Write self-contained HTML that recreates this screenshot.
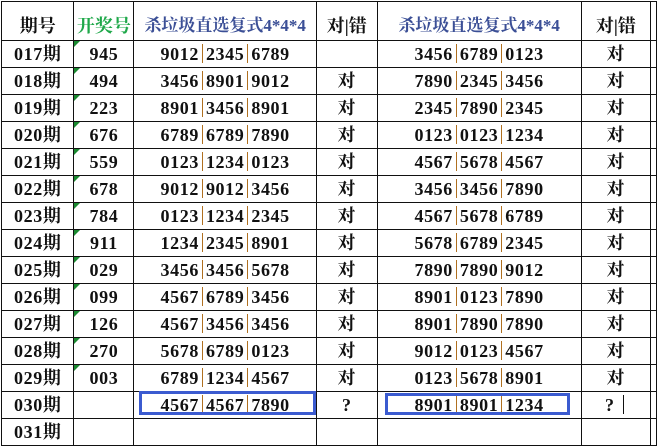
<!DOCTYPE html>
<html><head><meta charset="utf-8"><style>
body{margin:0;width:657px;height:446px;overflow:hidden;background:#fff;font-family:"Liberation Serif","Noto Serif CJK SC",serif;}
table{position:absolute;left:1px;top:1px;border-collapse:collapse;table-layout:fixed;}
td{border:1px solid #111;height:26px;line-height:26px;padding:0;text-align:center;font-weight:bold;font-size:18px;color:#111;white-space:nowrap;overflow:hidden;position:relative;vertical-align:middle;letter-spacing:0.6px;}
tr.h td{height:35px;line-height:22px;vertical-align:bottom;padding-bottom:3px;letter-spacing:0;}
.g{color:#1fa84a;} .b{color:#3b4f96;font-weight:bold;font-size:17px;letter-spacing:0 !important;}
.p{display:inline-block;width:1px;height:19px;background:#b07020;vertical-align:-3px;margin:0 3px;}
.tri{position:absolute;left:0;top:0;width:0;height:0;border-top:6px solid #1a8a30;border-right:6px solid transparent;}
.box{position:absolute;border:3px solid #3b5bd0;}
</style></head><body>
<table>
<colgroup><col style="width:73px"><col style="width:60px"><col style="width:183px"><col style="width:61px"><col style="width:205px"><col style="width:70px"><col style="width:6px"></colgroup>
<tr class="h"><td>期号</td><td class="g">开奖号</td><td class="b">杀垃圾直选复式4*4*4</td><td>对|错</td><td class="b" style="border-left-color:#ccc">杀垃圾直选复式4*4*4</td><td>对|错</td><td></td></tr>
<tr><td>017期</td><td><i class="tri"></i>945</td><td>9012<i class="p"></i>2345<i class="p"></i>6789</td><td></td><td>3456<i class="p"></i>6789<i class="p"></i>0123</td><td>对</td><td></td></tr>
<tr><td>018期</td><td><i class="tri"></i>494</td><td>3456<i class="p"></i>8901<i class="p"></i>9012</td><td>对</td><td>7890<i class="p"></i>2345<i class="p"></i>3456</td><td>对</td><td></td></tr>
<tr><td>019期</td><td><i class="tri"></i>223</td><td>8901<i class="p"></i>3456<i class="p"></i>8901</td><td>对</td><td>2345<i class="p"></i>7890<i class="p"></i>2345</td><td>对</td><td></td></tr>
<tr><td>020期</td><td><i class="tri"></i>676</td><td>6789<i class="p"></i>6789<i class="p"></i>7890</td><td>对</td><td>0123<i class="p"></i>0123<i class="p"></i>1234</td><td>对</td><td></td></tr>
<tr><td>021期</td><td><i class="tri"></i>559</td><td>0123<i class="p"></i>1234<i class="p"></i>0123</td><td>对</td><td>4567<i class="p"></i>5678<i class="p"></i>4567</td><td>对</td><td></td></tr>
<tr><td>022期</td><td><i class="tri"></i>678</td><td>9012<i class="p"></i>9012<i class="p"></i>3456</td><td>对</td><td>3456<i class="p"></i>3456<i class="p"></i>7890</td><td>对</td><td></td></tr>
<tr><td>023期</td><td><i class="tri"></i>784</td><td>0123<i class="p"></i>1234<i class="p"></i>2345</td><td>对</td><td>4567<i class="p"></i>5678<i class="p"></i>6789</td><td>对</td><td></td></tr>
<tr><td>024期</td><td><i class="tri"></i>911</td><td>1234<i class="p"></i>2345<i class="p"></i>8901</td><td>对</td><td>5678<i class="p"></i>6789<i class="p"></i>2345</td><td>对</td><td></td></tr>
<tr><td>025期</td><td><i class="tri"></i>029</td><td>3456<i class="p"></i>3456<i class="p"></i>5678</td><td>对</td><td>7890<i class="p"></i>7890<i class="p"></i>9012</td><td>对</td><td></td></tr>
<tr><td>026期</td><td><i class="tri"></i>099</td><td>4567<i class="p"></i>6789<i class="p"></i>3456</td><td>对</td><td>8901<i class="p"></i>0123<i class="p"></i>7890</td><td>对</td><td></td></tr>
<tr><td>027期</td><td><i class="tri"></i>126</td><td>4567<i class="p"></i>3456<i class="p"></i>3456</td><td>对</td><td>8901<i class="p"></i>7890<i class="p"></i>7890</td><td>对</td><td></td></tr>
<tr><td>028期</td><td><i class="tri"></i>270</td><td>5678<i class="p"></i>6789<i class="p"></i>0123</td><td>对</td><td>9012<i class="p"></i>0123<i class="p"></i>4567</td><td>对</td><td></td></tr>
<tr><td>029期</td><td><i class="tri"></i>003</td><td>6789<i class="p"></i>1234<i class="p"></i>4567</td><td>对</td><td>0123<i class="p"></i>5678<i class="p"></i>8901</td><td>对</td><td></td></tr>
<tr><td>030期</td><td></td><td>4567<i class="p"></i>4567<i class="p"></i>7890</td><td>?</td><td>8901<i class="p"></i>8901<i class="p"></i>1234</td><td>? <i class="p" style="background:#111"></i></td><td></td></tr>
<tr><td>031期</td><td></td><td></td><td></td><td></td><td></td><td></td></tr>
</table>
<div class="box" style="left:139px;top:391px;width:171px;height:18px"></div>
<div class="box" style="left:385px;top:393px;width:179px;height:16px"></div>
</body></html>
